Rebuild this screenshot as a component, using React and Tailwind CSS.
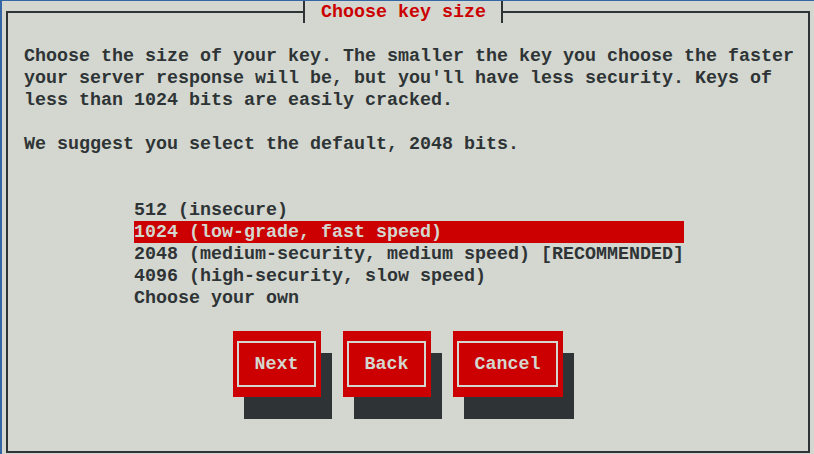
import React from 'react';

const keySizes = [
    '512 (insecure)',
    '1024 (low-grade, fast speed)',
    '2048 (medium-security, medium speed) [RECOMMENDED]',
    '4096 (high-security, slow speed)',
    'Choose your own',
];

const buttons = [
    { label: 'Next', width: 'w-[88px]' },
    { label: 'Back', width: 'w-[88px]' },
    { label: 'Cancel', width: 'w-[110px]' },
];

export default function App() {
    const selected = 1;

    return (
        <div className="w-[814px] h-[454px] overflow-hidden bg-[#3465a4] pl-[2px] pt-[1px] font-['Liberation_Mono',monospace] font-bold text-[18.33px] leading-[24px] text-[#2e3436]">
            <div className="w-[814px] h-[462px] bg-[#d3d7cf] pl-[4px] pt-[10px]">
                {/* dialog frame */}
                <div className="relative w-[804px] h-[442px] border-2 border-[#2e3436] pl-[16px] pt-[32px]">
                    {/* title on the top border */}
                    <div className="absolute left-[295px] top-[-12px] w-[200px] h-[22px] bg-[#d3d7cf] border-x-2 border-[#2e3436] pl-[16px] text-[#cc0000] whitespace-pre">
                        Choose key size
                    </div>

                    <div className="whitespace-pre">
                        <div className="h-[22px]">Choose the size of your key. The smaller the key you choose the faster</div>
                        <div className="h-[22px]">your server response will be, but you'll have less security. Keys of</div>
                        <div className="h-[22px]">less than 1024 bits are easily cracked.</div>
                        <div className="h-[22px]"></div>
                        <div className="h-[22px]">We suggest you select the default, 2048 bits.</div>
                    </div>

                    {/* key size list */}
                    <div className="mt-[44px] ml-[110px] w-[550px] whitespace-pre">
                        {keySizes.map((item, index) => (
                            <div
                                key={index}
                                className={`h-[22px] ${index === selected ? 'bg-[#cc0000] text-[#d3d7cf]' : ''}`}
                            >
                                {item}
                            </div>
                        ))}
                    </div>

                    {/* buttons */}
                    <div className="mt-[22px] ml-[209px] flex gap-[22px]">
                        {buttons.map((btn) => (
                            <div
                                key={btn.label}
                                className={`${btn.width} h-[66px] bg-[#cc0000] shadow-[11px_22px_0_0_#2e3436] pl-[4px] pr-[5px] py-[10px]`}
                            >
                                <div className="h-full border-2 border-[#d3d7cf] pt-[2px] leading-[22px] flex items-center justify-center text-[#d3d7cf]">
                                    {btn.label}
                                </div>
                            </div>
                        ))}
                    </div>
                </div>
            </div>
        </div>
    );
}
